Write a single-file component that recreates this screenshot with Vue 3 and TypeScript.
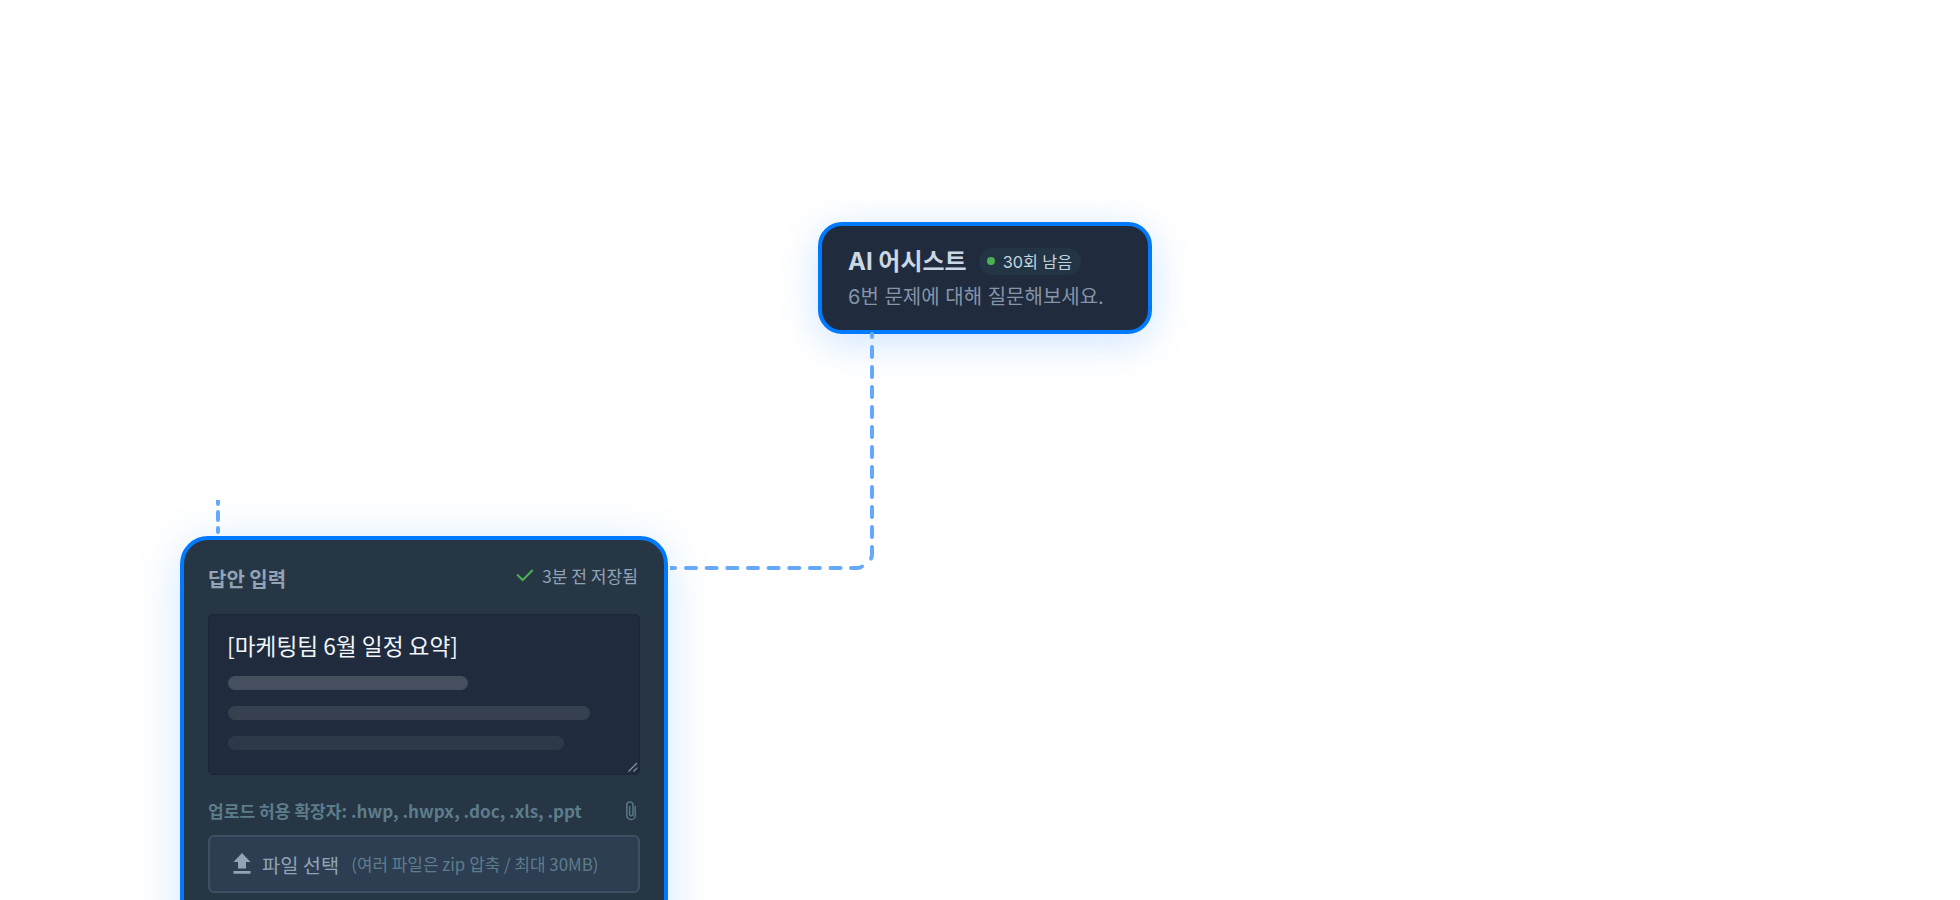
<script setup lang="ts">
import { ref } from 'vue'

interface Line {
  width: number
  tone: string
}

const title = ref('[마케팅팀 6월 일정 요약]')

const lines: Line[] = [
  { width: 240, tone: 'strong' },
  { width: 362, tone: 'medium' },
  { width: 336, tone: 'light' },
]

const extensions = ['.hwp', '.hwpx', '.doc', '.xls', '.ppt']
</script>

<template>
  <div class="canvas">
    <svg class="connector" width="1960" height="900" viewBox="0 0 1960 900" aria-hidden="true">
      <path d="M872 334V337M872 347V357" />
      <path d="M872 367V538" stroke-dasharray="10 10" />
      <path d="M872 547V554Q872 556.5 871 558.5" />
      <path d="M862 566.5Q860 568 857.5 568H851" />
      <path d="M675 568H672" />
      <path class="cut" d="M674 568H670" />
      <path d="M686 568H842" stroke-dasharray="10 10.65" />
      <path d="M218 502V504M218 512V520M218 528V532" />
      <path class="cut" d="M218 500V503" />
    </svg>

    <section class="card assist">
      <div class="assist-head">
        <h2>AI 어시스트</h2>
        <span class="badge"><i class="dot"></i>30회 남음</span>
      </div>
      <p>6번 문제에 대해 질문해보세요.</p>
    </section>

    <section class="card answer">
      <header class="answer-head">
        <h3>답안 입력</h3>
        <div class="saved">
          <svg width="18" height="14" viewBox="0 0 18 14" aria-hidden="true">
            <path d="M1 6.5L6.7 12L16.7 2" />
          </svg>
          <span>3분 전 저장됨</span>
        </div>
      </header>

      <div class="editor">
        <div class="editor-title">{{ title }}</div>
        <div
          v-for="line in lines"
          :key="line.tone"
          class="line"
          :class="line.tone"
          :style="{ width: `${line.width}px` }"
        ></div>
        <svg class="grip" width="10" height="10" viewBox="0 0 10 10" aria-hidden="true">
          <path d="M.5 9.5L9 1M5.5 9.5L9.3 5.7" />
        </svg>
      </div>

      <div class="allow">
        <span>업로드 허용 확장자: {{ extensions.join(', ') }}</span>
        <svg class="clip" width="10" height="20" viewBox="0 0 10 20" aria-hidden="true">
          <path d="M9.2 5V14.4A4.2 4.2 0 0 1 .8 14.4V4A3.1 3.1 0 0 1 7 4V13.2A1.7 1.7 0 0 1 3.6 13.2V5" />
        </svg>
      </div>

      <div class="upload">
        <svg width="18" height="21" viewBox="0 0 18 21" aria-hidden="true">
          <path d="M9 0L17.5 9H13V15.5H5V9H.5ZM.5 18H17.5V20.7H.5Z" />
        </svg>
        <span class="upload-label">파일 선택</span>
        <span class="upload-hint">(여러 파일은 zip 압축 / 최대 30MB)</span>
      </div>
    </section>
  </div>
</template>

<style>
body {
  margin: 0;
  background: #fff;
}
</style>

<style scoped>
.canvas {
  position: relative;
  width: 1960px;
  height: 900px;
  overflow: hidden;
  font-family: "Noto Sans CJK KR", sans-serif;
}

.canvas * {
  box-sizing: border-box;
}

h2,
h3,
p {
  margin: 0;
}

svg {
  display: block;
  flex: none;
}

.connector {
  position: absolute;
  inset: 0;
  z-index: 1;
}

.connector path {
  fill: none;
  stroke: #66a9fb;
  stroke-width: 4;
  stroke-linecap: round;
}

.connector .cut {
  stroke-linecap: butt;
}

.card {
  position: absolute;
  border: 4px solid #007aff;
  white-space: nowrap;
}

.assist {
  left: 818px;
  top: 222px;
  width: 334px;
  height: 112px;
  padding: 20px 26px;
  border-radius: 24px;
  background: #202b3d;
  box-shadow: 0 8px 40px rgba(0, 122, 255, .2);
  font-family: Inter, "Noto Sans CJK KR", sans-serif;
}

.assist-head {
  display: flex;
  align-items: center;
  gap: 12px;
  height: 30px;
}

.assist h2 {
  padding-top: 1px;
  font-size: 24px;
  line-height: 30px;
  font-weight: 700;
  color: #cbd8e4;
}

.badge {
  display: flex;
  align-items: center;
  gap: 8px;
  height: 27px;
  padding: 0 9px 0 8px;
  border-radius: 14px;
  background: #233544;
  color: #c6d4e0;
  font-size: 16.2px;
}

.dot {
  width: 8px;
  height: 8px;
  border-radius: 50%;
  background: #4caf50;
}

.assist p {
  margin-top: 6px;
  font-size: 20px;
  line-height: 30px;
  color: #8594a8;
}

.answer {
  left: 180px;
  top: 536px;
  width: 488px;
  height: 460px;
  padding: 24px;
  border-radius: 28px;
  background: #263645;
  box-shadow: 0 8px 48px rgba(0, 122, 255, .18);
}

.answer-head {
  display: flex;
  justify-content: space-between;
  height: 50px;
}

.answer h3 {
  font-size: 20px;
  line-height: 30px;
  font-weight: 700;
  color: #91a3b5;
}

.saved {
  display: flex;
  gap: 8px;
  height: 22px;
  align-items: center;
  padding-right: 2px;
  font-size: 17.1px;
  color: #91a3b5;
}

.saved path {
  fill: none;
  stroke: #4caf50;
  stroke-width: 2;
}

.editor {
  position: relative;
  height: 161px;
  padding: 16px 19px 0;
  border: 1px solid #1b2638;
  border-radius: 5px;
  background: #202b3d;
}

.editor-title {
  height: 30px;
  margin-bottom: 15px;
  margin-left: -1px;
  font-size: 22.7px;
  line-height: 30px;
  color: #f0f5fa;
}

.line {
  height: 14px;
  margin-bottom: 16px;
  border-radius: 7px;
}

.line.strong {
  background: #464f5e;
}

.line.medium {
  background: #36404f;
}

.line.light {
  background: #2d3848;
}

.grip {
  position: absolute;
  right: 1px;
  bottom: 2px;
}

.grip path {
  fill: none;
  stroke: #8594a8;
  stroke-width: 1.2;
}

.allow {
  display: flex;
  align-items: center;
  justify-content: space-between;
  height: 60px;
  padding: 11px 4px 0 0;
  font-size: 17.1px;
  font-weight: 700;
  color: #5d7d8b;
}

.allow .clip path {
  fill: none;
  stroke: #5d7d8b;
  stroke-width: 1.4;
}

.upload {
  display: flex;
  align-items: center;
  height: 58px;
  padding-left: 23px;
  border: 2px solid #3e5063;
  border-radius: 6px;
  background: #2d3e53;
}

.upload svg {
  margin-top: -2px;
}

.upload path {
  fill: #91a3b5;
}

.upload-label {
  margin-left: 11px;
  font-size: 19.8px;
  color: #91a3b5;
}

.upload-hint {
  margin-top: -1px;
  margin-left: 12px;
  font-size: 16.9px;
  color: #5d7d8b;
}
</style>
